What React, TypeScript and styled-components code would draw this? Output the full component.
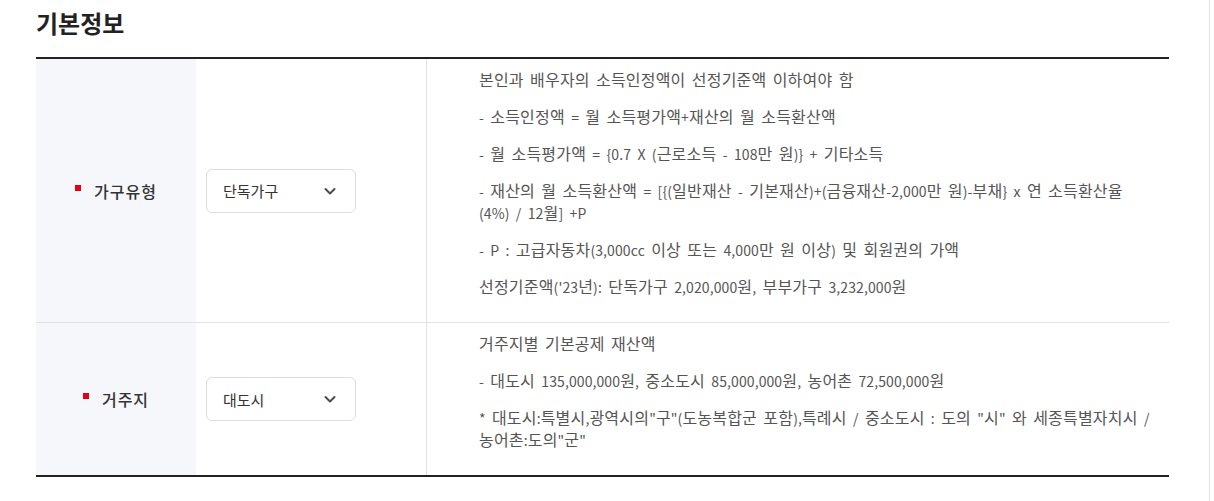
import React from 'react';
import styled, { createGlobalStyle } from 'styled-components';

const GlobalStyle = createGlobalStyle`
  html, body {
    margin: 0;
    padding: 0;
    background: #fff;
  }
  body {
    font-family: "Noto Sans CJK KR", "Noto Sans", sans-serif;
    color: #333;
  }
`;

const Page = styled.div`
  width: 1210px;
  height: 100vh;
  box-sizing: border-box;
  border-right: 1px solid #e3e3e3;
  padding: 0 40px 0 36px;
`;

const Title = styled.h2`
  margin: 0;
  padding-top: 6px;
  height: 57px;
  box-sizing: border-box;
  font-size: 24px;
  font-weight: 700;
  color: #222;
  line-height: 34px;
`;

const Table = styled.div`
  border-top: 2px solid #222;
  border-bottom: 2px solid #222;
`;

const Row = styled.div<{ $last?: boolean }>`
  display: grid;
  grid-template-columns: 160px 230px 1fr;
  border-bottom: ${p => (p.$last ? 'none' : '1px solid #e1e1e1')};
`;

const LabelCell = styled.div`
  background: #f5f7fb;
  display: flex;
  align-items: center;
  justify-content: center;
  gap: 13px;
  font-size: 16px;
  letter-spacing: 1px;
  font-weight: 500;
  color: #333;
`;

const Required = styled.span`
  width: 6px;
  height: 6px;
  background: #e60012;
  margin-top: -6px;
`;

const SelectCell = styled.div`
  display: flex;
  align-items: center;
  padding-left: 10px;
`;

const SelectBox = styled.div`
  width: 150px;
  height: 44px;
  box-sizing: border-box;
  border: 1px solid #dedede;
  border-radius: 6px;
  display: flex;
  align-items: center;
  justify-content: space-between;
  padding: 0 18px 0 16px;
  font-size: 15px;
  color: #333;
  background: #fff;
`;

const InfoCell = styled.div`
  border-left: 1px solid #e1e1e1;
  padding: 9px 12px 10px 52px;
`;

const Para = styled.p`
  margin: 0 0 15px;
  font-size: 16px;
  line-height: 22px;
  color: #555;
  letter-spacing: 0.2px;
  word-spacing: 2.5px;
  word-break: keep-all;
`;

// latin runs sit a little smaller than the hangul, like the original font
const Latin = styled.span`
  font-size: 14px;
  line-height: 1;
  letter-spacing: 0.1px;
`;

const Chevron = () => (
  <svg width="14" height="14" viewBox="0 0 14 14" fill="none">
    <path d="M2.5 5 L7 9.5 L11.5 5" stroke="#4a4a58" strokeWidth="2" strokeLinecap="round" strokeLinejoin="round" />
  </svg>
);

const renderNote = (text: string) =>
  text.split(/([\x21-\x7E]+)/).map((part, i) =>
    i % 2 === 1 ? <Latin key={i}>{part}</Latin> : part
  );

type Field = {
  label: string;
  value: string;
  notes: string[];
};

const fields: Field[] = [
  {
    label: '가구유형',
    value: '단독가구',
    notes: [
      '본인과 배우자의 소득인정액이 선정기준액 이하여야 함',
      '- 소득인정액 = 월 소득평가액+재산의 월 소득환산액',
      '- 월 소득평가액 = {0.7 X (근로소득 - 108만 원)} + 기타소득',
      '- 재산의 월 소득환산액 = [{(일반재산 - 기본재산)+(금융재산-2,000만 원)-부채} x 연 소득환산율 (4%) / 12월] +P',
      '- P : 고급자동차(3,000cc 이상 또는 4,000만 원 이상) 및 회원권의 가액',
      "선정기준액('23년): 단독가구 2,020,000원, 부부가구 3,232,000원",
    ],
  },
  {
    label: '거주지',
    value: '대도시',
    notes: [
      '거주지별 기본공제 재산액',
      '- 대도시 135,000,000원, 중소도시 85,000,000원, 농어촌 72,500,000원',
      '* 대도시:특별시,광역시의"구"(도농복합군 포함),특례시 / 중소도시 : 도의 "시" 와 세종특별자치시 / 농어촌:도의"군"',
    ],
  },
];

export default function App() {
  return (
    <>
      <GlobalStyle />
      <Page>
        <Title>기본정보</Title>
        <Table>
          {fields.map((f, i) => (
            <Row key={f.label} $last={i === fields.length - 1}>
              <LabelCell>
                <Required />
                {f.label}
              </LabelCell>
              <SelectCell>
                <SelectBox>
                  <span>{f.value}</span>
                  <Chevron />
                </SelectBox>
              </SelectCell>
              <InfoCell>
                {f.notes.map(n => (
                  <Para key={n}>{renderNote(n)}</Para>
                ))}
              </InfoCell>
            </Row>
          ))}
        </Table>
      </Page>
    </>
  );
}
